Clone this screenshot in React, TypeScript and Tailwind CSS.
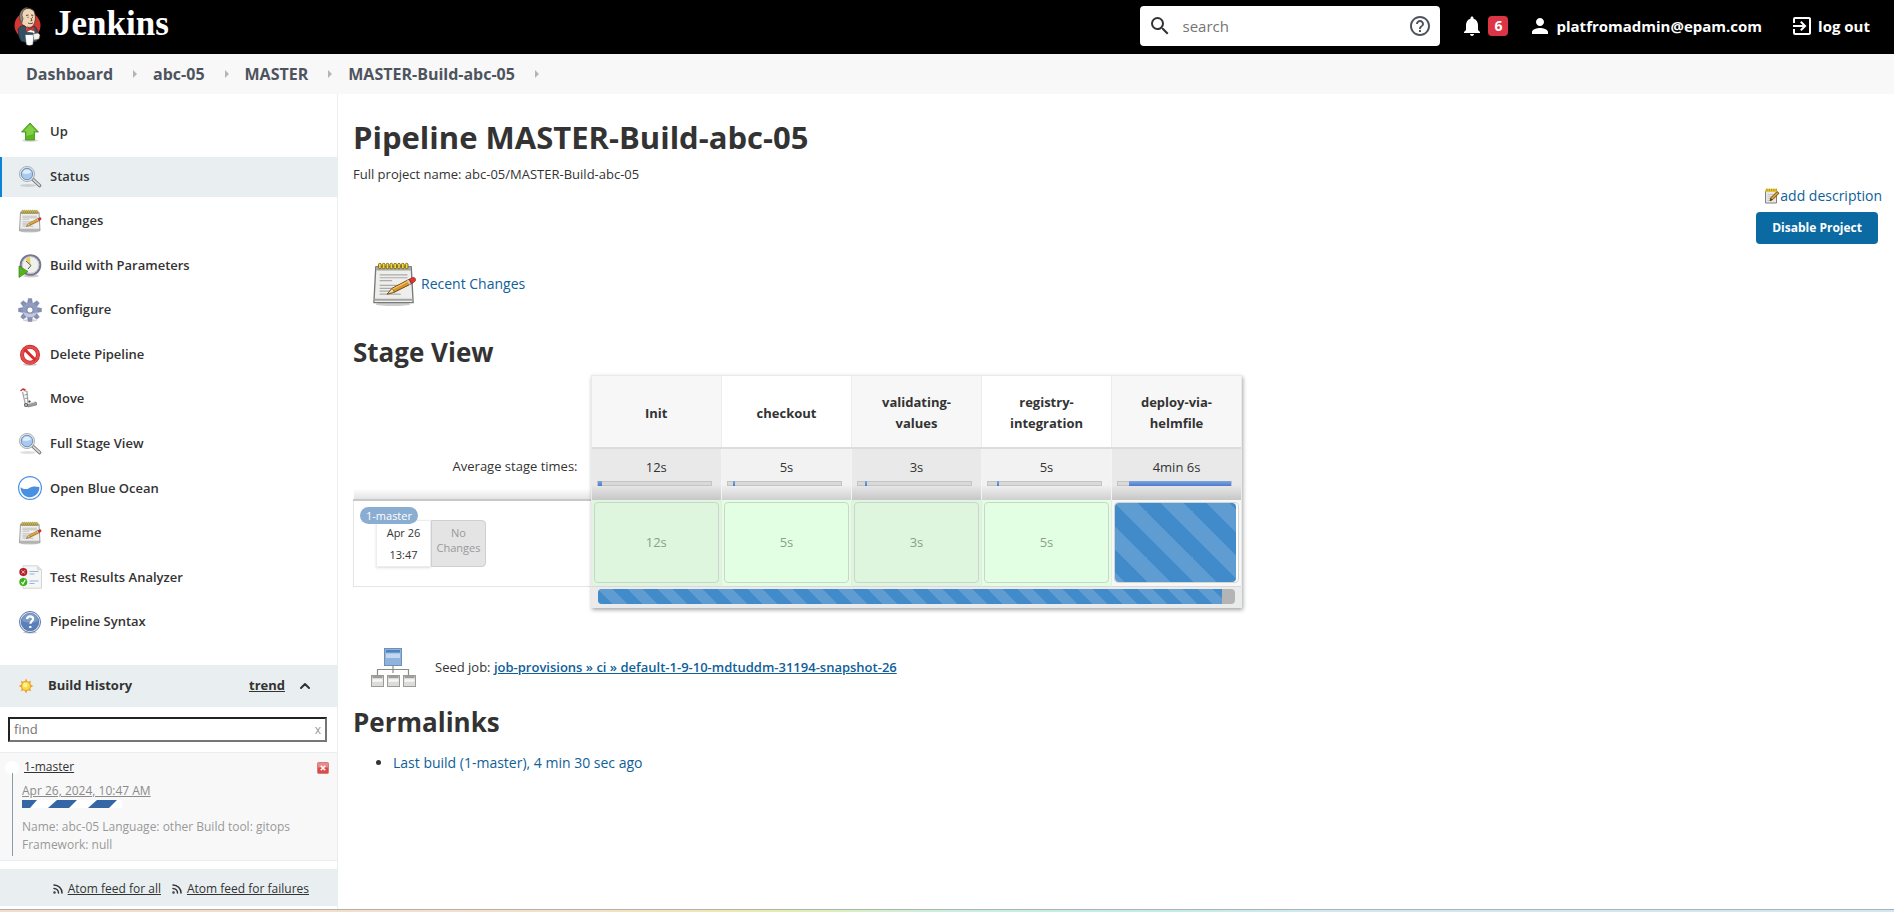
import type { ReactNode } from "react";
import { ChevronUp, Rss } from "lucide-react";
import { MdExitToApp, MdHelpOutline, MdNotifications, MdPerson, MdSearch } from "react-icons/md";

function ButlerLogo() {
  return (
    <svg viewBox="0 0 28 40" className="h-10 w-7" aria-hidden="true">
      <ellipse cx="13.5" cy="19.5" rx="13" ry="13" fill="#d33833" />
      <path d="M7 6C10 1 20 1 21 8c1 4 0 8-1 10-1 3-4 4-7 3-5-1-7-6-7-9z" fill="#f0d6b7" stroke="#49372b" strokeWidth="0.8" />
      <path d="M6 14C4 8 8 1 14 1.500c-4 2-6 4-6 8l1 3-1 4z" fill="#8b8782" stroke="#49372b" strokeWidth="0.600" />
      <path d="M12 9.500l2.500-.5M17 9l2.300.4M13.500 11.300h1M18 11.300h1M17 12l1 2.500-1.500.4M14 17c2 1 4 .8 5-.3" fill="none" stroke="#49372b" strokeWidth="0.9" />
      <path d="M4 23c2-3 5-4 7-3l4 4 5-4c2 1 4 4 4 8l-1 7c-5 2-12 2-16 0L5 31z" fill="#335061" stroke="#16242c" strokeWidth="0.600" />
      <path d="M12 20l4 4 4-3 .5 6-5.500 1-3-4z" fill="#fff" />
      <path d="M12 21l4 1.500 4-2 .5 4.500-4-1.300-4 2z" fill="#d33833" stroke="#81201c" strokeWidth="0.500" />
      <path d="M14 26l5 .5 1 6-6 2z" fill="#335061" />
      <path d="M11.500 29h8l-.8 9.500c-2 1-4.500 1-6.200 0z" fill="#fff" stroke="#c9c9c9" strokeWidth="0.400" />
      <path d="M19 28l5-1 2 2-1 4-5 1z" fill="#f7f0e8" stroke="#6d6b6d" strokeWidth="0.500" />
    </svg>
  );
}

function UpIcon() {
  return (
    <svg viewBox="0 0 24 24" className="size-6" aria-hidden="true">
      <ellipse cx="12" cy="20.500" rx="8" ry="1.500" fill="#000" opacity="0.15" />
      <path d="M12 3l8.500 9h-4v8h-9v-8h-4z" fill="#5cb81e" stroke="#3f8f1a" strokeWidth="0.8" strokeLinejoin="round" />
      <path d="M12 4.500l6.200 6.700H15.500V14l-7 2v-4.800H5.800z" fill="#9be05f" opacity="0.6" />
    </svg>
  );
}

function MagnifierIcon() {
  return (
    <svg viewBox="0 0 24 24" className="size-6" aria-hidden="true">
      <ellipse cx="10" cy="20.500" rx="8" ry="1.500" fill="#000" opacity="0.13" />
      <path d="M14.500 14l7 6.500" stroke="#7d7d7d" strokeWidth="3.600" strokeLinecap="round" />
      <path d="M15.500 14.800l6 5.500" stroke="#d8d8d8" strokeWidth="1.600" strokeLinecap="round" />
      <circle cx="9" cy="9" r="7.600" fill="#e4e4e0" stroke="#a3a3a0" strokeWidth="0.8" />
      <circle cx="9" cy="9" r="5.700" fill="#a9c9ee" stroke="#5f8cc6" strokeWidth="0.9" />
      <path d="M4.500 8.500a4.600 4.600 0 0 1 8.800-1.200c-2.500 2-5.800 2-8.800 1.200z" fill="#e8f2fd" opacity="0.85" />
    </svg>
  );
}

function NotepadIcon({ className }: { className: string }) {
  return (
    <svg viewBox="0 0 48 48" className={className} aria-hidden="true">
      <ellipse cx="23" cy="45" rx="18" ry="2" fill="#000" opacity="0.2" />
      <path d="M5 6h37l2 37.500H3z" fill="#eeeeec" stroke="#77797a" strokeWidth="1.400" strokeLinejoin="round" />
      <path d="M5.500 6h36l.4 4H5.200z" fill="#a6a7a5" />
      <path d="M4 40.500h39.500" stroke="#a4a5a3" strokeWidth="2" />
      <path d="M9 14.500h29M9 17.500h29M9 20.500h13M9 25.500h24M9 28.500h18M9 31.500h13M9 34.500h22" stroke="#a9aaa9" strokeWidth="1.200" />
      {[9, 13, 17, 21, 25, 29, 33, 37].map((x) => (
        <rect key={x} x={x - 1.2} y="2.500" width="2.800" height="5.500" rx="1.200" fill="#f0d84a" stroke="#7d6908" strokeWidth="1" />
      ))}
      <path d="M17 34.500l5-6 18-9.500 2.500 4.500-18 9z" fill="#d9962c" stroke="#6e4608" strokeWidth="1" strokeLinejoin="round" />
      <path d="M17 34.500l5-6 2.500 4z" fill="#f1dfb4" stroke="#6e4608" strokeWidth="0.700" />
      <path d="M22.500 29.500l17-8.800" stroke="#f6c873" strokeWidth="1.200" />
      <path d="M40 19l3.500-1.800c2.500-.6 4 2.300 2.200 4.200L42.500 23.500z" fill="#e23434" stroke="#8d1a1a" strokeWidth="0.700" />
      <path d="M38.300 20l2.300 4.400" stroke="#ccc" strokeWidth="1.800" />
    </svg>
  );
}

function SmallNotepadIcon() {
  return (
    <svg viewBox="0 0 16 16" className="size-4" aria-hidden="true">
      <path d="M1.500 3h11v12h-11z" fill="#e8e8e6" stroke="#80817f" />
      <path d="M3.500 6.500h6M3.500 8.500h5M3.500 10.500h3M3.500 12.500h3" stroke="#bbb" strokeWidth="0.8" />
      <path d="M1.500 .8h11.500v3.200H1.500z" fill="#e8c93a" />
      <path d="M3 .6v2.600M5.300 .6v2.600M7.600 .6v2.600M9.900 .6v2.600M12.200 .6v2.600" stroke="#a18414" strokeWidth="0.800" />
      <path d="M6 12.800l1-3.200 6-6 2 1.600-6.200 6.400z" fill="#e0a030" stroke="#5f4210" strokeWidth="0.9" />
      <path d="M6 12.800l.8-2.500 1.400 1.400z" fill="#4a3410" />
    </svg>
  );
}

function ClockIcon() {
  return (
    <svg viewBox="0 0 24 24" className="size-6" aria-hidden="true">
      <ellipse cx="13" cy="22" rx="8" ry="1.500" fill="#000" opacity="0.2" />
      <circle cx="12.500" cy="11" r="9.800" fill="#f1f1ec" stroke="#77778f" strokeWidth="2" />
      <circle cx="12.500" cy="11" r="8.300" fill="none" stroke="#b8b8c6" strokeWidth="0.800" />
      <path d="M12.500 11L7.500 5a7.500 7.500 0 0 1 4.500-1.800z" fill="#e9cf55" />
      <path d="M8 7l5 4.500L10 15" fill="none" stroke="#444" strokeWidth="0.900" />
      <path d="M1 12l9 5.500L1 23.500z" fill="#55b31d" stroke="#3b8611" strokeWidth="0.700" />
    </svg>
  );
}

function GearIcon() {
  return (
    <svg viewBox="0 0 24 24" className="size-6" aria-hidden="true">
      <ellipse cx="12" cy="22.300" rx="7" ry="1.200" fill="#000" opacity="0.18" />
      <g fill="#8690b5" stroke="#6f7aa3" strokeWidth="0.400">
        {[0, 45, 90, 135, 180, 225, 270, 315].map((angle) => (
          <path key={angle} d="M9.200 6.500L10.300 .5h3.400L14.800 6.500z" transform={`rotate(${angle} 12 12)`} />
        ))}
      </g>
      <circle cx="12" cy="12" r="7.600" fill="#929cc0" />
      <path d="M5 14a7.300 7.300 0 0 0 14 0c-4 2-9 2-14 0z" fill="#c2c8de" />
      <circle cx="12" cy="12" r="3.200" fill="#fff" stroke="#68739b" strokeWidth="0.9" />
    </svg>
  );
}

function ForbiddenIcon() {
  return (
    <svg viewBox="0 0 24 24" className="size-6" aria-hidden="true">
      <ellipse cx="12" cy="21.500" rx="7" ry="1.300" fill="#000" opacity="0.2" />
      <circle cx="12" cy="11.800" r="8" fill="#fff" stroke="#c42222" strokeWidth="4" />
      <circle cx="12" cy="11.800" r="8" fill="none" stroke="#e64b4b" strokeWidth="2.800" />
      <path d="M6.500 6.300l11 11" stroke="#d92b2b" strokeWidth="3" />
    </svg>
  );
}

function HandTruckIcon() {
  return (
    <svg viewBox="0 0 24 24" className="size-6" aria-hidden="true">
      <path d="M5.500 3.500l3.500 1 1 12M4.500 5l3 12.500" fill="none" stroke="#a7a7a7" strokeWidth="1.300" />
      <path d="M6.500 8l3-.5M7 11.500l2.800-.5" stroke="#888" strokeWidth="0.9" />
      <path d="M3 3.500l2-1.500 2 .8" fill="none" stroke="#cf2a2a" strokeWidth="1.500" strokeLinecap="round" />
      <path d="M9 17.500l8-2.500 1.500 .5v2.500l-8.500 2z" fill="#9d9d9d" stroke="#6a6a6a" strokeWidth="0.600" />
      <path d="M9.500 17l8-2.300" stroke="#e5e5e5" strokeWidth="0.9" />
      <circle cx="8" cy="18" r="2" fill="#555" />
      <circle cx="8" cy="18" r="0.900" fill="#ddd" />
      <circle cx="11.500" cy="14.500" r="1.100" fill="#333" />
    </svg>
  );
}

function OceanIcon() {
  return (
    <svg viewBox="0 0 24 24" className="size-6" aria-hidden="true">
      <circle cx="12" cy="12" r="11.400" fill="#fff" stroke="#4a90e2" strokeWidth="1.200" />
      <path d="M2.500 11.200c2.500 1.800 5.500 2.600 8 1.200 3.500-2 6.500-2.200 10.800-1.300.6 5.200-3.800 10.200-9.300 10.200-5.200 0-9.500-4.500-9.500-10.100z" fill="#4a90e2" />
    </svg>
  );
}

function TestResultsIcon() {
  return (
    <svg viewBox="0 0 24 24" className="size-6" aria-hidden="true">
      <path d="M5 .8h14.500l4 4v18.400H5z" fill="#f6f6f6" stroke="#cfcfcf" strokeWidth="0.9" />
      <path d="M19.500 .8v4h4" fill="#ddd" stroke="#ccc" strokeWidth="0.500" />
      <path d="M11.500 6.500h9M11.500 9h5M11.500 16h9M11.500 18.500h5" stroke="#89aed6" strokeWidth="0.9" />
      <circle cx="5.300" cy="7" r="4" fill="#b3202a" />
      <path d="M3.700 5.400l3.200 3.200M6.900 5.400L3.700 8.600" stroke="#f4d7d7" strokeWidth="1" />
      <circle cx="5.300" cy="17" r="4" fill="#37b31a" />
      <path d="M3.400 17l1.500 2L7.300 14.800" fill="none" stroke="#fff" strokeWidth="1.200" />
    </svg>
  );
}

function HelpIcon() {
  return (
    <svg viewBox="0 0 24 24" className="size-6" aria-hidden="true">
      <ellipse cx="12" cy="22.300" rx="7" ry="1.200" fill="#000" opacity="0.2" />
      <circle cx="12" cy="12" r="10.500" fill="#e9eef6" stroke="#48699b" strokeWidth="0.9" />
      <circle cx="12" cy="12" r="8.800" fill="#5b80b8" stroke="#3d62a0" strokeWidth="0.600" />
      <path d="M4 11a8 8 0 0 1 16 0c-5 2-11 2-16 0z" fill="#87a5d0" opacity="0.7" />
      <path d="M9 9.200c.2-2 1.500-2.900 3.100-2.900 1.800 0 3 1 3 2.600 0 2.200-2.700 2.300-2.700 4.800M12.300 16v2.100" fill="none" stroke="#fff" strokeWidth="2.200" />
    </svg>
  );
}

function SunIcon() {
  return (
    <svg viewBox="0 0 16 16" className="size-4" aria-hidden="true">
      <g fill="#f3a32a">
        {[0, 45, 90, 135, 180, 225, 270, 315].map((angle) => (
          <path key={angle} d="M6.300 4L8 .6 9.700 4z" transform={`rotate(${angle} 8 8)`} />
        ))}
      </g>
      <circle cx="8" cy="8" r="4.500" fill="#fbdc3f" stroke="#e99a35" strokeWidth="0.9" />
      <circle cx="7.300" cy="7" r="2.300" fill="#fff3a0" />
    </svg>
  );
}

function HierarchyIcon() {
  return (
    <svg viewBox="2 0 46 48" className="h-12 w-[46px] shrink-0" aria-hidden="true">
      <path d="M24 20v9M8.500 31v-5.500h31V31" fill="none" stroke="#8a8c88" strokeWidth="1.200" />
      <rect x="15.500" y="4.500" width="17" height="17" fill="#8fb4dc" stroke="#6f8fb8" />
      <rect x="17" y="6" width="14" height="2.500" fill="#4f82c2" />
      <rect x="17" y="9.500" width="14" height="4.500" fill="#c3d8ef" />
      {[2.5, 18.5, 34.5].map((x) => (
        <g key={x}>
          <rect x={x} y="31.500" width="12" height="11" fill="#dcddd8" stroke="#9a9c97" />
          <path d={`M${x + 1} 33h10`} stroke="#85888a" strokeWidth="1.500" />
          <path d={`M${x + 1} 36.500h10`} stroke="#f7f7f5" strokeWidth="2.500" />
        </g>
      ))}
    </svg>
  );
}

function StopIcon() {
  return (
    <svg viewBox="0 0 12 12" className="size-3" aria-hidden="true">
      <rect x="0.500" y="0.500" width="11" height="11" rx="1" fill="#dd4a4a" stroke="#d08080" />
      <rect x="1" y="1" width="10" height="4.500" fill="#ec8a8a" />
      <path d="M3.800 3.800l4.400 4.400M8.200 3.800l-4.400 4.400" stroke="#fff" strokeWidth="1.600" />
    </svg>
  );
}

const crumbs = ["Dashboard", "abc-05", "MASTER", "MASTER-Build-abc-05"];

const tasks: { label: string; icon: ReactNode; current?: boolean }[] = [
  { label: "Up", icon: <UpIcon /> },
  { label: "Status", icon: <MagnifierIcon />, current: true },
  { label: "Changes", icon: <NotepadIcon className="size-6" /> },
  { label: "Build with Parameters", icon: <ClockIcon /> },
  { label: "Configure", icon: <GearIcon /> },
  { label: "Delete Pipeline", icon: <ForbiddenIcon /> },
  { label: "Move", icon: <HandTruckIcon /> },
  { label: "Full Stage View", icon: <MagnifierIcon /> },
  { label: "Open Blue Ocean", icon: <OceanIcon /> },
  { label: "Rename", icon: <NotepadIcon className="size-6" /> },
  { label: "Test Results Analyzer", icon: <TestResultsIcon /> },
  { label: "Pipeline Syntax", icon: <HelpIcon /> },
];

const stages = [
  { name: "Init", time: "12s", start: 0, share: 4 },
  { name: "checkout", time: "5s", start: 4, share: 2 },
  { name: "validating-values", time: "3s", start: 6, share: 2 },
  { name: "registry-integration", time: "5s", start: 8, share: 2 },
  { name: "deploy-via-helmfile", time: "4min 6s", start: 10, share: 90, running: true },
];

const stripes =
  "bg-[#428bca] bg-[linear-gradient(45deg,rgba(255,255,255,.15)_25%,transparent_25%,transparent_50%,rgba(255,255,255,.15)_50%,rgba(255,255,255,.15)_75%,transparent_75%)]";

function Header() {
  return (
    <header className="flex h-[54px] items-center bg-black pr-6 pb-0.5 pl-3.5 text-white">
      <a href="#home" className="flex items-center gap-3">
        <ButlerLogo />
        <span className="pb-1 font-['Liberation_Serif',serif] text-[35px] leading-10 font-bold">Jenkins</span>
      </a>
      <div className="ml-auto flex h-10 w-[300px] items-center rounded bg-white px-2 text-[#333]">
        <MdSearch className="size-6" />
        <input aria-label="Search" placeholder="search" className="ml-2.5 min-w-0 flex-1 text-[15px] outline-none placeholder:text-[#757575]" />
        <a href="#help" aria-label="Search help" className="text-[#4d545d]">
          <MdHelpOutline className="size-6" />
        </a>
      </div>
      <button type="button" aria-label="6 notifications" className="ml-5 flex items-center gap-1">
        <MdNotifications className="size-6" />
        <span className="flex h-5 w-5 items-center justify-center rounded bg-[#dc3545] text-sm font-bold">6</span>
      </button>
      <a href="#user" className="ml-5 flex items-center gap-1 text-[15px] font-bold">
        <MdPerson className="size-6" />
        platfromadmin@epam.com
      </a>
      <a href="#logout" className="ml-7 flex items-center gap-1 text-[15px] font-bold">
        <MdExitToApp className="size-6" />
        log out
      </a>
    </header>
  );
}

function Breadcrumbs() {
  return (
    <nav aria-label="Breadcrumb" className="h-10 bg-[#f8f8f8]">
      <ol className="flex h-full items-center pl-[26px] text-base font-bold text-[#4d545d]">
        {crumbs.map((crumb) => (
          <li key={crumb} className="flex items-center">
            <a href={`#${crumb}`}>{crumb}</a>
            <svg viewBox="0 0 4 8" className="mr-4 ml-5 h-2 w-1" aria-hidden="true">
              <path d="M0 0l4 4-4 4z" fill="#b5b5b5" />
            </svg>
          </li>
        ))}
      </ol>
    </nav>
  );
}

function BuildHistory() {
  return (
    <section className="mt-[23px] text-[#333]">
      <div className="flex h-[42px] items-center bg-[#e9eff1] pr-6 pl-[18px]">
        <SunIcon />
        <h2 className="ml-3.5 text-[13px] font-bold">Build History</h2>
        <a href="#trend" className="ml-auto text-[13px] font-bold underline">
          trend
        </a>
        <ChevronUp className="ml-3 size-4" strokeWidth={3} />
      </div>
      <div className="px-2 py-2.5 pr-2.5">
        <div className="flex h-[25px] items-center border-2 border-[#767676] border-t-[#222] border-l-[#222] px-1">
          <input aria-label="Find build" placeholder="find" className="min-w-0 flex-1 text-[13px] outline-none placeholder:text-[#757575]" />
          <button type="button" aria-label="Clear" className="text-xs text-[#999]">
            x
          </button>
        </div>
      </div>
      <div className="relative flex h-[109px] items-start justify-between border-y border-[#e9eff1] bg-[#f8f8f8] pt-[5px] pr-2 pl-[22px] text-xs">
        <span className="absolute top-2 left-[5px] size-3.5 rounded-full bg-white" />
        <span className="absolute top-5 bottom-1 left-3 w-px bg-[#8e9ba5]" />
        <div className="leading-[18px]">
          <a href="#build-1" className="ml-0.5 block w-fit underline">
            1-master
          </a>
          <a href="#build-1-time" className="mt-1.5 block w-fit text-[#8b8b8b] underline">
            Apr 26, 2024, 10:47 AM
          </a>
          <svg viewBox="0 0 100 8" className="h-2 w-[100px]" role="img" aria-label="Build in progress">
            <path d="M0 0h100v8H0z" fill="#fff" />
            <path d="M0 0h15L8 8H0zM35 0h20l-8 8H26zM75 0h20l-8 8H66z" fill="#3465a4" />
          </svg>
          <p className="mt-2.5 w-[290px] text-[#999]">Name: abc-05 Language: other Build tool: gitops Framework: null</p>
        </div>
        <button type="button" aria-label="Stop build" className="mt-1">
          <StopIcon />
        </button>
      </div>
      <div className="mt-2 mb-[3px] flex h-[37px] items-center justify-end gap-2.5 bg-[#e9eff1] pt-0.5 pr-7 text-xs">
        <a href="#feed-all" className="flex items-center gap-1 underline">
          <Rss className="size-3" strokeWidth={3} />
          Atom feed for all
        </a>
        <a href="#feed-failures" className="flex items-center gap-1 underline">
          <Rss className="size-3" strokeWidth={3} />
          Atom feed for failures
        </a>
      </div>
    </section>
  );
}

function Sidebar() {
  return (
    <aside className="w-[338px] shrink-0 border-r border-[#e9eff1] pt-[18px]">
      <nav aria-label="Pipeline" className="grid min-h-[530px] content-between">
        {tasks.map((task) => (
          <a
            key={task.label}
            href={`#${task.label}`}
            aria-current={task.current ? "page" : undefined}
            className={`flex h-10 items-center gap-2 border-l-2 pl-4 text-[13px] font-semibold text-[#333] ${
              task.current ? "border-[#0b84d8] bg-[#e9eff1]" : "border-transparent"
            }`}
          >
            {task.icon}
            {task.label}
          </a>
        ))}
      </nav>
      <BuildHistory />
    </aside>
  );
}

function StageView() {
  return (
    <div className="relative mt-[5px] w-fit">
      <table className="table-fixed border-collapse text-[13px] text-[#333]">
        <colgroup>
          <col className="w-[238px]" />
          {stages.map((stage) => (
            <col key={stage.name} className="w-[130px]" />
          ))}
        </colgroup>
        <thead>
          <tr className="h-[73px]">
            <td />
            {stages.map((stage) => (
              <th key={stage.name} scope="col" className="border-r border-[#ececec] px-5 pt-1 leading-[21px] font-bold odd:bg-white even:bg-[#f7f7f7]">
                {stage.name.replace("-", "-\u200b")}
              </th>
            ))}
          </tr>
        </thead>
        <tbody>
          <tr className="h-[52px]">
            <th scope="row" className="border-b-2 border-[#c8c8c8] bg-[linear-gradient(transparent_80%,#e4e4e4)] pr-3.5 pb-3.5 text-right font-normal">
              Average stage times:
            </th>
            {stages.map((stage) => (
              <td
                key={stage.name}
                className="border-t-2 border-r border-[#dcdcdc] border-r-[#f4f4f4] px-[5px] text-center odd:bg-[linear-gradient(#f2f2f2_70%,#cfcfcf)] even:bg-[linear-gradient(#e9e9e9_70%,#c6c6c6)]"
              >
                <div className="pt-1 leading-6">{stage.time}</div>
                <div className="mt-0.5 mr-1 mb-3 h-[5px] border border-[#c4c4c4] bg-[#d9d9d9]">
                  <div
                    className="h-[5px] -translate-y-px bg-[linear-gradient(#7fa6d9,#4a7bd0)]"
                    style={{ marginLeft: `${stage.start}%`, width: `${stage.share}%` }}
                  />
                </div>
              </td>
            ))}
          </tr>
          <tr className="h-[86px]">
            <th scope="row" className="border-b border-l border-[#e5e5e5] px-1.5 pt-1.5 text-left align-top font-normal">
              <div className="relative z-10 w-fit rounded-full bg-[#8aadd2] px-1.5 text-[11px] leading-[17px] text-white">1-master</div>
              <div className="-mt-1 ml-4 flex h-[47px] w-[110px] text-center text-[11px]">
                <div className="flex-1 border border-[#e9eff1] bg-white pt-px leading-[22px] shadow-sm">
                  Apr 26
                  <br />
                  13:47
                </div>
                <div className="flex-1 rounded-r border border-[#cfcfcf] bg-[#e4e4e4] pt-1 leading-[15px] text-[#999]">
                  No
                  <br />
                  Changes
                </div>
              </div>
            </th>
            {stages.map((stage) => (
              <td
                key={stage.name}
                className={`border-r border-[#e3ecdf] p-0.5 text-center text-[#8b9f8b] ${
                  stage.running ? "bg-[#f7f7f7]" : "odd:bg-[#e3ffe3] even:bg-[#ddf6dd]"
                }`}
              >
                {stage.running ? (
                  <div className="h-[81px] rounded border border-[#d0d6d0] bg-white pr-0.5">
                    <div role="img" aria-label="Running" className={`h-full rounded-sm bg-size-[46px_46px] ${stripes}`} />
                  </div>
                ) : (
                  <div className="flex h-[81px] items-center justify-center rounded border border-[#ccd5cc]">{stage.time}</div>
                )}
              </td>
            ))}
          </tr>
          <tr className="h-[21px]">
            <td />
            <td colSpan={5} className="border border-[#d8d8d8] bg-[#ebebeb] px-1.5">
              <div className="h-[15px] overflow-hidden rounded bg-[#b4b4b4]">
                <div role="progressbar" aria-label="Build progress" aria-valuenow={98} className={`h-full w-[98%] bg-size-[30px_30px] ${stripes}`} />
              </div>
            </td>
          </tr>
        </tbody>
      </table>
      <div className="pointer-events-none absolute inset-y-0 right-0 left-[238px] border border-[#e4ecee] shadow-[1px_2px_4px_rgba(0,0,0,0.35)]" />
    </div>
  );
}

function Main() {
  return (
    <main className="min-w-0 flex-1 pt-[21px] pr-3 pl-[15px] text-[#333]">
      <h1 className="text-[31px] leading-[44px] font-bold">Pipeline MASTER-Build-abc-05</h1>
      <p className="mt-[5px] text-[13px] leading-5">Full project name: abc-05/MASTER-Build-abc-05</p>
      <div className="mt-0.5 flex flex-col items-end">
        <a href="#description" className="flex h-5 items-center text-sm font-medium text-[#0f6099]">
          <SmallNotepadIcon />
          add description
        </a>
        <button type="button" className="mt-1.5 mr-1 h-8 rounded bg-[#0b6aa2] px-4 text-xs font-bold text-white">
          Disable Project
        </button>
      </div>
      <a href="#changes" className="mt-4 ml-[18px] flex h-12 w-fit items-center gap-1 text-sm font-medium text-[#0f6099]">
        <NotepadIcon className="size-[46px]" />
        Recent Changes
      </a>
      <h2 className="mt-[26px] text-[26px] leading-9 font-bold">Stage View</h2>
      <StageView />
      <div className="mt-9 ml-[18px] flex items-center gap-[18px] text-[13px]">
        <HierarchyIcon />
        <p>
          Seed job:{" "}
          <a href="#seed" className="font-semibold text-[#0f6099] underline">
            job-provisions » ci » default-1-9-10-mdtuddm-31194-snapshot-26
          </a>
        </p>
      </div>
      <h2 className="mt-3 text-[26px] leading-9 font-bold">Permalinks</h2>
      <ul className="mt-[11px] list-disc pl-10 text-sm leading-6">
        <li>
          <a href="#last" className="font-medium text-[#0f6099]">
            Last build (1-master), 4 min 30 sec ago
          </a>
        </li>
      </ul>
    </main>
  );
}

export default function App() {
  return (
    <div className="flex min-h-screen flex-col bg-white font-['Open_Sans',sans-serif]">
      <Header />
      <Breadcrumbs />
      <div className="flex flex-1">
        <Sidebar />
        <Main />
      </div>
      <footer className="h-[3px] border-t border-[#b0b0b0] bg-[linear-gradient(90deg,#f5dcc8,#f5e0c8_30%,#f0e8b0_38%,#dff0b0_42%,#c8f0e0_50%,#c0eee8_60%,#cdeaf0_70%,#cfe8f2)]" />
    </div>
  );
}
